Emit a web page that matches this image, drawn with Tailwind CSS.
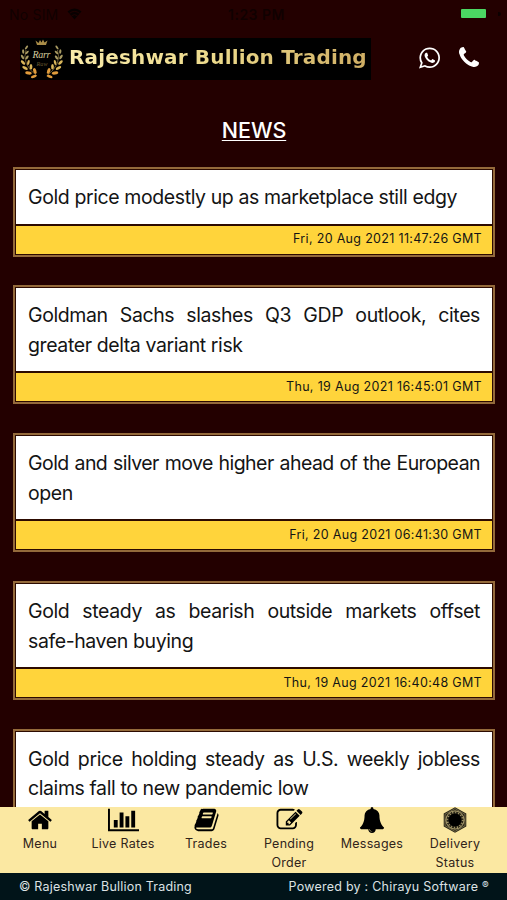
<!DOCTYPE html>
<html lang="en">
<head>
<meta charset="utf-8">
<title>Rajeshwar Bullion Trading</title>
<script src="https://cdn.jsdelivr.net/npm/@tailwindcss/browser@4"></script>
</head>
<body class="w-[507px] h-[900px] overflow-hidden bg-[#230000] flex flex-col font-['Inter',sans-serif]">
<div class="h-[28px] shrink-0 flex items-center justify-between pl-[9px] pr-[3px] text-[14px] text-[#100000]">
  <div class="w-[180px] flex items-center gap-[9px]"><span class="tracking-[0.2px]">No SIM</span>
    <svg class="w-[15px] h-[12px]" viewBox="0 0 15 12" fill="#080000"><path d="M0.500 3.500Q7.500-2.500 14.500 3.500L7.500 11.500z"/><path d="M2.500 5.300Q7.500 1.500 12.500 5.300M4.600 7.700Q7.500 5.500 10.400 7.700" fill="none" stroke="#230000" stroke-width=".9"/></svg></div>
  <div class="font-semibold tracking-[0.5px]">1:23 PM</div>
  <div class="w-[180px] flex items-center justify-end gap-[12px]"><div class="w-[25px] h-[9px] mt-[-1px] rounded-[1px] bg-[#4bd763]"></div><div class="w-[3px] h-[4px] mr-[3px] rounded-r-full bg-[#0c0000]"></div></div>
</div>
<header class="h-[62px] shrink-0 pt-[10px] pl-[20px] flex items-start">
  <div class="w-[351px] h-[42px] bg-black flex items-center">
    <svg class="w-[43px] h-[42px] shrink-0" viewBox="0 0 43 42">
      <defs>
        <g id="branch">
          <path d="M6 12Q1 26 17 38" fill="none" stroke="#a88f4e" stroke-width=".6"/>
          <g fill="#a89a62">
            <ellipse cx="6.500" cy="9.500" rx="1" ry="2.300" transform="rotate(35 6.500 9.500)"/>
            <ellipse cx="3.200" cy="13.500" rx="1.100" ry="2.300" transform="rotate(-5 3.200 13.500)"/>
            <ellipse cx="7" cy="14.500" rx="1" ry="2.300" transform="rotate(45 7 14.500)"/>
            <ellipse cx="2.500" cy="19" rx="1.200" ry="2.500" transform="rotate(-30 2.500 19)"/>
            <ellipse cx="7" cy="19.500" rx="1.100" ry="2.400" transform="rotate(35 7 19.500)"/>
          </g>
          <g fill="#d8b65a">
            <ellipse cx="3" cy="24.500" rx="1.300" ry="2.800" transform="rotate(-45 3 24.500)"/>
            <ellipse cx="8.400" cy="24.500" rx="1.200" ry="2.600" transform="rotate(15 8.400 24.500)"/>
            <ellipse cx="5" cy="30" rx="1.400" ry="3" transform="rotate(-62 5 30)"/>
            <ellipse cx="11" cy="28.800" rx="1.400" ry="2.800"/>
          </g>
          <g fill="#e09c3c">
            <ellipse cx="8.500" cy="35" rx="1.600" ry="3.300" transform="rotate(-80 8.500 35)"/>
            <ellipse cx="14.800" cy="33" rx="1.600" ry="3" transform="rotate(-20 14.800 33)"/>
            <ellipse cx="13.800" cy="38.500" rx="1.400" ry="3" transform="rotate(70 13.800 38.500)"/>
          </g>
        </g>
      </defs>
      <use href="#branch"/><use href="#branch" transform="translate(43.500 0) scale(-1 1)"/>
      <path d="M15.500 2.500l3 2.500 1.500-3 1.500 2.500 1.500-3 1.500 3 3-2-1.500 4.500h-9z" fill="#a98c48"/>
      <text x="12.500" y="20" font-size="10" font-style="italic" font-family="Liberation Serif, serif" fill="#d7cc9e" textLength="18">Rarr</text>
      <text x="16.500" y="28" font-size="6" font-style="italic" font-family="Liberation Serif, serif" fill="#6a5930" textLength="11">Raw</text>
    </svg>
    <div class="ml-[6px] mt-[-4px] whitespace-nowrap font-['DejaVu_Sans',sans-serif] font-bold text-[20px] leading-[30px] tracking-[0.160px] text-transparent bg-clip-text bg-linear-to-r from-[#f9ebaa] via-[#ecd98a] via-50% to-[#cfae64]">Rajeshwar Bullion Trading</div>
  </div>
  <svg class="ml-[48px] mt-[9px] w-[21px] h-[22px]" viewBox="128 122 1536 1546" fill="#fff"><path d="M1113 974q13 0 97.500 44t89.500 53q2 5 2 15 0 33-17 76-16 39-71 65.500t-102 26.500q-57 0-190-62-98-45-170-118t-148-185q-72-107-71-194v-8q3-91 74-158 24-22 52-22 6 0 18 1.500t19 1.500q19 0 26.500 6.500t15.500 27.500q8 20 33 88t25 75q0 21-34.500 57.500t-34.500 46.500q0 7 5 15 34 73 102 137 56 53 151 101 12 7 22 7 15 0 54-48.500t52-48.500zm-203 530q127 0 243.500-50t200.500-134 134-200.500 50-243.500-50-243.500-134-200.500-200.500-134-243.500-50-243.500 50-200.500 134-134 200.500-50 243.500q0 203 120 368l-79 233 242-77q158 104 345 104zm0-1382q153 0 292.500 60t240.500 161 161 240.500 60 292.500-60 292.500-161 240.500-240.500 161-292.500 60q-195 0-365-94l-417 134 136-405q-108-178-108-389 0-153 60-292.500t161-240.500 240.500-161 292.500-60z"/></svg>
  <svg class="ml-[19px] mt-[9px] w-[20px] h-[20px]" viewBox="192 128 1408 1408" fill="#fff"><path d="M1600 1240q0 27-10 70.500t-21 68.500q-21 50-122 106-94 51-186 51-27 0-53-3.500t-57.500-12.500-47-14.500-55.500-20.500-49-18q-98-35-175-83-127-79-264-216t-216-264q-48-77-83-175-3-9-18-49t-20.500-55.500-14.500-47-12.500-57.500-3.500-53q0-92 51-186 56-101 106-122 25-11 68.500-21t70.500-10q14 0 21 3 18 6 53 76 11 19 30 54t35 63.500 31 53.500q3 4 17.500 25t21.500 35.500 7 28.500q0 20-28.500 50t-62 55-62 53-28.500 46q0 9 5 22.500t8.500 20.500 14 24 11.500 19q76 137 174 235t235 174q2 1 19 11.500t24 14 20.500 8.500 22.500 5q18 0 46-28.500t53-62 55-62 50-28.500q14 0 28.500 7t35.500 21.500 25 17.500q25 15 53.500 31t63.500 35 54 30q70 35 76 53 3 7 3 21z"/></svg>
</header>
<main class="flex-1 min-h-0 overflow-hidden px-[13px]">
  <h1 class="mt-[25px] h-[30px] mb-[22px] pl-[1px] text-center text-[21.500px] leading-[30px] font-medium tracking-[-0.050px] text-white underline decoration-[1px] underline-offset-[2px]">NEWS</h1>
  <div class="flex flex-col gap-[29px] text-[#141414]">
    <article class="w-[482px] h-[90px] -mb-px border-2 border-[#946a3b] bg-[#2c0a00] p-px flex flex-col gap-[2px]">
      <p class="flex-1 bg-white px-[12px] pt-[13px] text-[19.500px] leading-[29.500px] tracking-[-0.400px] text-justify">Gold price modestly up as marketplace still edgy</p>
      <div class="h-[28px] bg-[#ffd43b] pr-[10px] text-right text-[12.500px] leading-[25px] tracking-[0.320px]">Fri, 20 Aug 2021 11:47:26 GMT</div>
    </article>
    <article class="w-[482px] h-[119px] border-2 border-[#946a3b] bg-[#2c0a00] p-px flex flex-col gap-[2px]">
      <p class="flex-1 bg-white px-[12px] pt-[13px] text-[19.500px] leading-[29.500px] tracking-[-0.400px] text-justify">Goldman Sachs slashes Q3 GDP outlook, cites greater delta variant risk</p>
      <div class="h-[28px] bg-[#ffd43b] pr-[10px] text-right text-[12.500px] leading-[27px] tracking-[0.340px]">Thu, 19 Aug 2021 16:45:01 GMT</div>
    </article>
    <article class="w-[482px] h-[119px] border-2 border-[#946a3b] bg-[#2c0a00] p-px flex flex-col gap-[2px]">
      <p class="flex-1 bg-white px-[12px] pt-[13px] text-[19.500px] leading-[29.500px] tracking-[-0.550px] text-justify">Gold and silver move higher ahead of the European <span class="tracking-[-0.400px]">open</span></p>
      <div class="h-[28px] bg-[#ffd43b] pr-[10px] text-right text-[12.500px] leading-[27px] tracking-[0.320px]">Fri, 20 Aug 2021 06:41:30 GMT</div>
    </article>
    <article class="w-[482px] h-[119px] border-2 border-[#946a3b] bg-[#2c0a00] p-px flex flex-col gap-[2px]">
      <p class="flex-1 bg-white px-[12px] pt-[13px] text-[19.500px] leading-[29.500px] tracking-[-0.400px] text-justify">Gold steady as bearish outside markets offset safe-haven buying</p>
      <div class="h-[28px] bg-[#ffd43b] pr-[10px] text-right text-[12.500px] leading-[27px] tracking-[0.320px]">Thu, 19 Aug 2021 16:40:48 GMT</div>
    </article>
    <article class="w-[482px] h-[119px] border-2 border-[#946a3b] bg-[#2c0a00] p-px flex flex-col gap-[2px]">
      <p class="flex-1 bg-white px-[12px] pt-[13px] text-[19.500px] leading-[29px] tracking-[-0.400px] text-justify">Gold price holding steady as U.S. weekly jobless claims fall to new pandemic low</p>
      <div class="h-[28px] bg-[#ffd43b]"></div>
    </article>
  </div>
</main>
<nav class="h-[66px] shrink-0 bg-[#fbe8a2] grid grid-cols-[81.5px_83px_83px_83px_83px_83px] text-center text-[12.500px] leading-[19.250px] tracking-[0.270px] text-[#30241a]">
  <div class="flex flex-col items-center pr-[1.500px]"><svg class="w-[26px] h-[26px] mb-[1px]" viewBox="0 0 1792 1792" fill="#000"><path d="M1472 992v480q0 26-19 45t-45 19h-384v-384h-256v384h-384q-26 0-45-19t-19-45v-480q0-1 .5-3t.5-3l575-474 575 474q1 2 1 6zm223-69l-62 74q-8 9-21 11h-3q-13 0-21-7l-692-577-692 577q-12 8-24 7-13-2-21-11l-62-74q-8-10-7-23.500t11-21.500l719-599q32-26 76-26t76 26l244 204v-195q0-14 9-23t23-9h192q14 0 23 9t9 23v408l219 182q10 8 11 21.500t-7 23.500z"/></svg>Menu</div>
  <div class="flex flex-col items-center"><svg class="w-[31px] h-[26px] mb-[1px]" viewBox="0 0 2048 1792" preserveAspectRatio="none" fill="#000"><path d="M640 896v512h-256v-512h256zm384-512v1024h-256v-1024h256zm1024 1152v128h-2048v-1536h128v1408h1920zm-640-896v768h-256v-768h256zm384-384v1152h-256v-1152h256z"/></svg>Live Rates</div>
  <div class="flex flex-col items-center"><svg class="w-[27px] h-[26px] mb-[1px]" viewBox="0 0 1792 1792" fill="#000"><path d="M1703 478q40 57 18 129l-275 906q-19 64-76.500 107.500t-122.500 43.500h-923q-77 0-148.500-53.500t-99.500-131.500q-24-67-2-127 0-4 3-27t4-37q1-8-3-21.500t-3-19.500q2-11 8-21t16.500-23.500 16.500-23.500q23-38 45-91.500t30-91.500q3-10 .5-30t-.5-28q3-11 17-28t17-23q21-36 42-92t25-90q1-9-2.500-32t.5-28q4-13 22-30.500t22-22.500q19-26 42.500-84.500t27.500-96.500q1-8-3-25.500t-2-26.500q2-8 9-18t18-23 17-21q8-12 16.500-30.500t15-35 16-36 19.500-32 26.500-23.500 36-11.500 47.500 5.500l-1 3q38-9 51-9h761q74 0 114 56t18 130l-274 906q-36 119-71.500 153.500t-128.500 34.500h-869q-27 0-38 15-11 16-1 43 24 70 144 70h923q29 0 56-15.500t35-41.500l300-987q7-22 5-57 38 15 59 43zm-1064 2q-4 13 2 22.500t20 9.500h608q13 0 25.500-9.500t16.500-22.500l21-64q4-13-2-22.500t-20-9.500h-608q-13 0-25.500 9.500t-16.500 22.500zm-83 256q-4 13 2 22.500t20 9.500h608q13 0 25.500-9.500t16.500-22.500l21-64q4-13-2-22.500t-20-9.500h-608q-13 0-25.500 9.500t-16.500 22.500z"/></svg>Trades</div>
  <div class="flex flex-col items-center"><svg class="w-[27px] h-[26px] mb-[1px]" viewBox="0 0 1792 1792" fill="#000"><path d="M888 1184l116-116-152-152-116 116v56h96v96h56zm440-720q-16-16-33 1l-350 350q-17 17-1 33t33-1l350-350q17-17 1-33zm80 594v190q0 119-84.500 203.500t-203.500 84.500h-832q-119 0-203.500-84.500t-84.500-203.500v-832q0-119 84.500-203.500t203.500-84.500h832q63 0 117 25 15 7 18 23 3 17-9 29l-49 49q-14 14-32 8-23-6-45-6h-832q-66 0-113 47t-47 113v832q0 66 47 113t113 47h832q66 0 113-47t47-113v-126q0-13 9-22l64-64q15-15 35-7t20 29zm-96-738l288 288-672 672h-288v-288zm444 132l-92 92-288-288 92-92q28-28 68-28t68 28l152 152q28 28 28 68t-28 68z"/></svg>Pending<br>Order</div>
  <div class="flex flex-col items-center"><svg class="w-[26px] h-[26px] mb-[1px]" viewBox="0 0 1792 1792" fill="#000"><path d="M912 1696q0-16-16-16-59 0-101.500-42.500t-42.500-101.500q0-16-16-16t-16 16q0 73 51.500 124.500t124.500 51.500q16 0 16-16zm816-288q0 52-38 90t-90 38h-448q0 106-75 181t-181 75-181-75-75-181h-448q-52 0-90-38t-38-90q50-42 91-88t85-119.500 74.500-158.500 50-206 19.500-260q0-152 117-282.500t307-158.500q-8-19-8-39 0-40 28-68t68-28 68 28 28 68q0 20-8 39 190 28 307 158.500t117 282.500q0 139 19.500 260t50 206 74.500 158.500 85 119.500 91 88z"/></svg>Messages</div>
  <div class="flex flex-col items-center"><svg class="w-[26px] h-[26px] mb-[1px]" viewBox="0 0 26 26"><path d="M13 .2l11.300 6.400v12.800L13 25.800 1.700 19.400V6.600z" fill="#2a2618"/><path d="M13 1.600l10 5.700v11.400l-10 5.700-10-5.700V7.300z" fill="none" stroke="#9e9265" stroke-width=".6"/><circle cx="13" cy="13" r="9.100" fill="none" stroke="#d0c088" stroke-width=".8"/><circle cx="13" cy="13" r="7.600" fill="none" stroke="#a99c6e" stroke-width="2" stroke-dasharray="1 1.985"/><circle cx="13" cy="13" r="6.500" fill="#000"/></svg>Delivery<br>Status</div>
</nav>
<footer class="h-[27px] shrink-0 bg-[#011419] pl-[19px] pr-[18px] flex justify-between text-[12.500px] leading-[27px] tracking-[0.200px] text-[#dce2e4]"><span>© Rajeshwar Bullion Trading</span><span class="tracking-[0.250px]">Powered by : Chirayu Software <span class="text-[10px] relative -top-[2px]">®</span></span></footer>
</body>
</html>
